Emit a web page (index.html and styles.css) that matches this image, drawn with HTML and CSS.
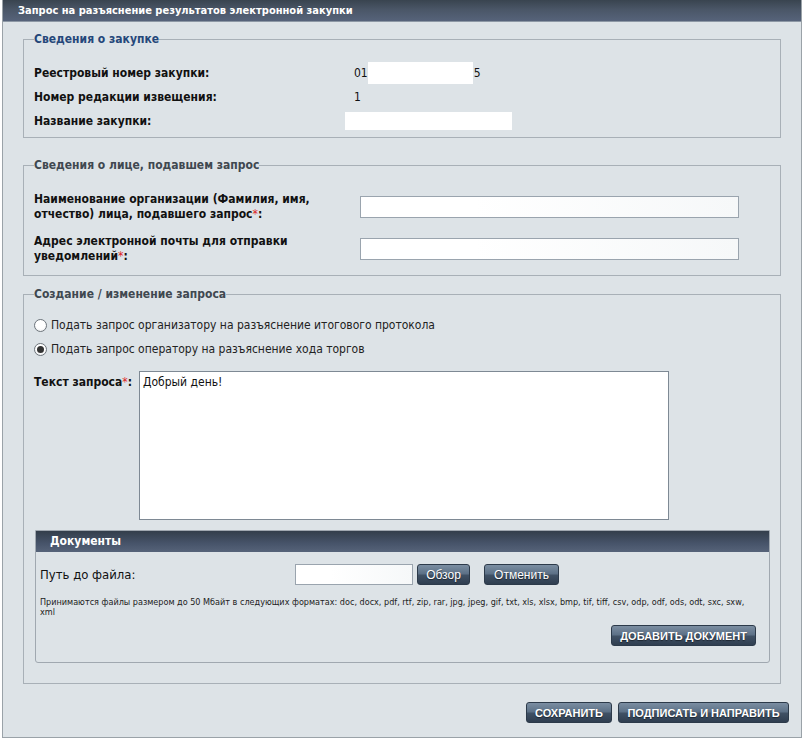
FILE: index.html
```html
<!DOCTYPE html>
<html lang="ru">
<head>
<meta charset="utf-8">
<title>Запрос на разъяснение</title>
<link rel="stylesheet" href="styles.css">
</head>
<body>
<div class="panel">
  <div class="panel-head">Запрос на разъяснение результатов электронной закупки</div>
  <div class="panel-body">
    <fieldset class="box box-info">
      <legend class="legend legend-blue">Сведения о закупке</legend>
      <div class="info-grid">
        <div class="lbl">Реестровый номер закупки:</div>
        <div class="val">01<span class="mask mask-num"></span>5</div>
        <div class="lbl">Номер редакции извещения:</div>
        <div class="val">1</div>
        <div class="lbl">Название закупки:</div>
        <div class="val"><span class="mask mask-name"></span></div>
      </div>
    </fieldset>

    <fieldset class="box box-person">
      <legend class="legend">Сведения о лице, подавшем запрос</legend>
      <div class="form-row">
        <div class="lbl lbl-wide">Наименование организации (Фамилия, имя, отчество) лица, подавшего запрос<span class="req">*</span>:</div>
        <input class="text-input wide-input" type="text">
      </div>
      <div class="form-row">
        <div class="lbl lbl-wide">Адрес электронной почты для отправки уведомлений<span class="req">*</span>:</div>
        <input class="text-input wide-input" type="text">
      </div>
    </fieldset>

    <fieldset class="box box-request">
      <legend class="legend">Создание / изменение запроса</legend>
      <label class="radio-row"><input class="radio" type="radio" name="r"> Подать запрос организатору на разъяснение итогового протокола</label>
      <label class="radio-row"><input class="radio" type="radio" name="r" checked> Подать запрос оператору на разъяснение хода торгов</label>
      <div class="text-row">
        <div class="lbl">Текст запроса<span class="req">*</span>:</div>
        <textarea class="textarea">Добрый день!</textarea>
      </div>

      <div class="docs">
        <div class="docs-head">Документы</div>
        <div class="docs-body">
          <div class="file-row">
            <span class="file-lbl">Путь до файла:</span>
            <input class="text-input file-input" type="text">
            <button class="btn btn-small btn-browse">Обзор</button>
            <button class="btn btn-small btn-cancel">Отменить</button>
          </div>
          <p class="note">Принимаются файлы размером до 50 Мбайт в следующих форматах: doc, docx, pdf, rtf, zip, rar, jpg, jpeg, gif, txt, xls, xlsx, bmp, tif, tiff, csv, odp, odf, ods, odt, sxc, sxw, xml</p>
          <div class="add-row"><button class="btn btn-caps">ДОБАВИТЬ ДОКУМЕНТ</button></div>
        </div>
      </div>
    </fieldset>

    <div class="actions">
      <button class="btn btn-caps btn-save">СОХРАНИТЬ</button>
      <button class="btn btn-caps btn-send">ПОДПИСАТЬ И НАПРАВИТЬ</button>
    </div>
  </div>
</div>
</body>
</html>
```
FILE: styles.css
```css
* { box-sizing: border-box; }
body {
  margin: 0;
  background: #ffffff;
  font-family: "DejaVu Sans Condensed", "DejaVu Sans", sans-serif;
  font-stretch: condensed;
  font-size: 12px;
  color: #111;
}
.panel {
  margin-left: 2px;
  width: 800px;
  height: 738px;
  background: #dde3e7;
  border: 1px solid #9aa2a8;
  border-top: 0;
}
.panel-head {
  height: 22px;
  line-height: 22px;
  padding-left: 15px;
  color: #fff;
  font-weight: bold;
  font-size: 11px;
  background: linear-gradient(#39444f 0%, #4a5667 45%, #56637a 100%);
  border-bottom: 1px solid #8d98a5;
}
.panel-body {
  padding: 10px 20px 0 20px;
}
.box {
  margin: 0;
  border: 1px solid #a8b0b7;
  padding: 0 10px;
}
.legend {
  padding: 0;
  margin-left: 0;
  font-weight: bold;
  font-size: 12px;
  color: #404850;
}
.legend-blue { color: #25477a; }
.box-info { padding-top: 18px; padding-bottom: 7px; }
.info-grid {
  display: grid;
  grid-template-columns: 320px 1fr;
  row-gap: 6px;
}
.lbl { font-weight: bold; line-height: 18px; }
.val { line-height: 18px; display: flex; align-items: center; }
.mask { display: inline-block; background: #fff; }
.mask-num { width: 105px; height: 22px; margin: -2px 1px -2px 0; }
.mask-name { width: 167px; height: 18px; margin-left: -9px; }

.box-person { margin-top: 20px; padding-top: 20px; padding-bottom: 11px; }
.form-row { display: flex; align-items: center; }
.form-row + .form-row { margin-top: 12px; }
.lbl-wide { width: 326px; line-height: 15px; padding-right: 30px; }
.text-input {
  border: 1px solid #9aa4ae;
  background: linear-gradient(90deg, #fff 0%, #fff 30%, #f6f8f9 100%);
  height: 22px;
  font: inherit;
}
.wide-input { width: 379px; }
.req { color: #d22; font-weight: normal; }

.box-request { margin-top: 11px; padding: 12px 10px 20px 10px; }
.radio-row { display: flex; align-items: center; gap: 4px; height: 24px; color: #222; }
.radio {
  appearance: none;
  -webkit-appearance: none;
  width: 13px; height: 13px; margin: 0 0 0 0;
  border: 1px solid #6e757c;
  border-radius: 50%;
  background: radial-gradient(circle at 50% 40%, #fff 0%, #fff 50%, #e2e5e8 100%);
  position: relative;
}
.radio:checked::after {
  content: "";
  position: absolute;
  left: 2px; top: 2px;
  width: 7px; height: 7px;
  border-radius: 50%;
  background: #333;
}
.text-row { display: flex; align-items: flex-start; margin-top: 10px; }
.text-row .lbl { width: 105px; margin-top: 2px; }
.textarea {
  width: 530px; height: 149px;
  border: 1px solid #7e8994;
  background: #fff;
  font: inherit;
  padding: 3px 3px;
  resize: none;
  color: #111;
}
.docs {
  margin-top: 10px;
  margin-left: 1px;
  width: 735px;
  border: 1px solid #a0a8b0;
  border-radius: 0 0 3px 3px;
}
.docs-head {
  height: 21px;
  line-height: 21px;
  padding-left: 14px;
  color: #fff;
  font-weight: bold;
  background: linear-gradient(#333e4b 0%, #47546a 60%, #566379 100%);
}
.docs-body { padding: 12px 13px 16px 4px; }
.file-row { display: flex; align-items: center; }
.file-lbl { font-size: 13px; width: 255px; }
.file-input { width: 118px; height: 21px; }
.note {
  margin: 12px 0 0 0;
  font-size: 9px;
  line-height: 10px;
  color: #222;
}
.add-row { display: flex; justify-content: flex-end; margin-top: 8px; }
.btn {
  font-family: "Liberation Sans", Arial, sans-serif;
  color: #fff;
  border: 1px solid #2c3a4a;
  border-radius: 3px;
  background: linear-gradient(#7b8ea2 0%, #5d7187 45%, #3f5064 55%, #2f3e50 100%);
  text-shadow: 0 1px 1px #1c2530;
  height: 21px;
  padding: 0 4px;
  cursor: pointer;
}
.btn-small { font-size: 12px; height: 21px; }
.btn-browse { width: 53px; margin-left: 4px; }
.btn-cancel { width: 75px; margin-left: 14px; }
.btn-caps { font-weight: bold; font-size: 11px; height: 21px; padding: 0 8px; }
.actions {
  display: flex;
  justify-content: flex-end;
  gap: 6px;
  margin-top: 18px;
  margin-right: -8px;
}
.btn-save { width: 86px; }
.btn-send { width: 171px; }
```
